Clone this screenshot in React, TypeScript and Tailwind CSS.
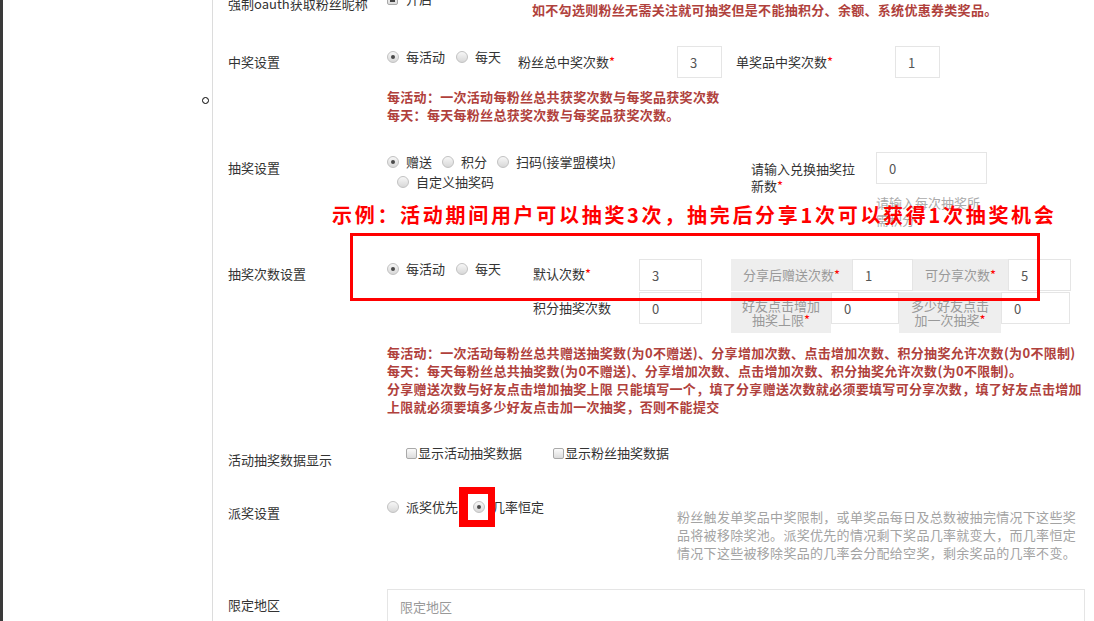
import React from "react";

const Radio = ({ checked = false }: { checked?: boolean }) => (
  <span className="inline-flex w-[12px] h-[12px] shrink-0 items-center justify-center rounded-full border border-[#c2c2c2] bg-linear-to-b from-[#f7f7f7] to-[#d8d8d8]">
    {checked && <span className="w-[4px] h-[4px] rounded-full bg-[#4a4a4a]" />}
  </span>
);

const Opt = ({ checked = false, label, cls = "" }: { checked?: boolean; label: string; cls?: string }) => (
  <span className={"inline-flex items-center " + cls}>
    <Radio checked={checked} />
    <span className="ml-[7px]">{label}</span>
  </span>
);

const Check = ({ checked = false }: { checked?: boolean }) => (
  <span className="inline-flex w-[11px] h-[11px] shrink-0 items-center justify-center rounded-[2px] border border-[#a9a9a9] bg-linear-to-b from-[#fbfbfb] to-[#dcdcdc]">
    {checked && <span className="w-[5px] h-[5px] bg-[#444]" />}
  </span>
);

const Star = () => <span className="text-[#f00]">*</span>;

const Box = ({ v, w, h = "h-[32px]" }: { v: string; w: string; h?: string }) => (
  <input
    readOnly
    defaultValue={v}
    className={`${w} ${h} shrink-0 border border-[#e5e5e5] bg-white px-[12px] text-[13px] text-[#555] outline-none`}
  />
);

export default function App() {
  return (
    <div className="w-[1094px] h-[621px] overflow-hidden flex bg-white [font-family:'Noto_Sans_CJK_SC','Noto_Sans',sans-serif] text-[13px] text-[#333]">
      <div className="w-[3px] shrink-0 bg-[#3a3a3a]" />
      <div className="w-[209px] shrink-0 relative">
        <span className="absolute left-[199px] top-[97px] w-[7px] h-[7px] rounded-full border-[1.5px] border-black" />
      </div>
      <div className="flex-1 relative border-l border-[#dcdcdc] pl-[15px] flex flex-col">
        {/* Row A */}
        <div className="flex h-[52px] -mt-[6px] shrink-0">
          <div className="w-[159px] shrink-0 leading-[20px] whitespace-nowrap">强制oauth获取粉丝昵称</div>
          <div className="flex items-start">
            <div className="w-[145px] h-[20px] -mt-[5px] leading-[20px] flex items-center">
              <Check checked />
              <span className="ml-[8px]">开启</span>
            </div>
            <div className="mt-[6px] leading-[20px] font-bold tracking-[0.3px] text-[#b0413c] whitespace-nowrap">
              如不勾选则粉丝无需关注就可抽奖但是不能抽积分、余额、系统优惠券类奖品。
            </div>
          </div>
        </div>

        {/* Row B 中奖设置 */}
        <div className="flex h-[106px] shrink-0">
          <div className="w-[159px] shrink-0 pt-[6px] leading-[20px]">中奖设置</div>
          <div className="flex flex-col">
            <div className="flex h-[32px]">
              <div className="w-[131px] pt-[1px] leading-[20px] flex items-center self-start">
                <Opt checked label="每活动" />
                <Opt label="每天" cls="ml-[11px]" />
              </div>
              <div className="w-[159px] pt-[6px] leading-[20px]">
                粉丝总中奖次数<Star />
              </div>
              <Box v="3" w="w-[45px]" />
              <div className="ml-[14px] w-[159px] pt-[6px] leading-[20px]">
                单奖品中奖次数<Star />
              </div>
              <Box v="1" w="w-[45px]" />
            </div>
            <div className="mt-[10px] leading-[18px] font-bold tracking-[0.3px] text-[#b0413c] whitespace-nowrap">
              每活动：一次活动每粉丝总共获奖次数与每奖品获奖次数
              <br />
              每天：每天每粉丝总获奖次数与每奖品获奖次数。
            </div>
          </div>
        </div>

        {/* Row C 抽奖设置 */}
        <div className="flex h-[107px] shrink-0">
          <div className="w-[159px] shrink-0 pt-[6px] leading-[20px]">抽奖设置</div>
          <div className="flex items-start">
            <div className="w-[240px] leading-[20px]">
              <div className="flex items-center">
                <Opt checked label="赠送" />
                <Opt label="积分" cls="ml-[10px]" />
                <Opt label="扫码(接掌盟模块)" cls="ml-[10px]" />
              </div>
              <div className="flex items-center pl-[10px]">
                <Opt label="自定义抽奖码" />
              </div>
            </div>
            <div className="ml-[124px] w-[112px] pt-[8px] leading-[17px]">
              请输入兑换抽奖拉
              <br />
              新数<Star />
            </div>
            <div className="ml-[13px] flex flex-col">
              <Box v="0" w="w-[111px]" />
              <div className="mt-[10px] leading-[17px] text-[#aaa]">
                请输入每次抽奖所
                <br />
                需积分
              </div>
            </div>
          </div>
        </div>

        {/* Row D 抽奖次数设置 */}
        <div className="flex h-[184px] shrink-0">
          <div className="w-[159px] shrink-0 pt-[5px] leading-[20px]">抽奖次数设置</div>
          <div className="flex flex-col">
            <div className="flex">
              <div className="w-[146px] leading-[20px] flex items-center self-start">
                <Opt checked label="每活动" />
                <Opt label="每天" cls="ml-[11px]" />
              </div>
              <div className="flex flex-col">
                <div className="flex h-[32px]">
                  <div className="w-[106px] pt-[5px] leading-[20px]">
                    默认次数<Star />
                  </div>
                  <Box v="3" w="w-[63px]" />
                  <div className="ml-[29px] flex">
                    <div className="w-[121px] h-[32px] bg-[#eee] text-[#999] text-center leading-[32px]">
                      分享后赠送次数<Star />
                    </div>
                    <Box v="1" w="w-[61px]" />
                    <div className="w-[95px] h-[32px] bg-[#eee] text-[#999] text-center leading-[32px]">
                      可分享次数<Star />
                    </div>
                    <Box v="5" w="w-[63px]" />
                  </div>
                </div>
                <div className="flex mt-[1px] items-start">
                  <div className="w-[106px] pt-[6px] leading-[20px]">积分抽奖次数</div>
                  <Box v="0" w="w-[63px]" />
                  <div className="ml-[29px] flex items-start">
                    <div className="w-[100px] h-[41px] bg-[#eee] text-[#999] text-center pt-[7px] leading-[14px]">
                      好友点击增加
                      <br />
                      抽奖上限<Star />
                    </div>
                    <Box v="0" w="w-[68px]" />
                    <div className="w-[102px] h-[41px] bg-[#eee] text-[#999] text-center pt-[7px] leading-[14px]">
                      多少好友点击
                      <br />
                      加一次抽奖<Star />
                    </div>
                    <Box v="0" w="w-[69px]" />
                  </div>
                </div>
              </div>
            </div>
            <div className="mt-[11px] leading-[18px] font-bold tracking-[0.3px] text-[#b0413c] whitespace-nowrap">
              每活动：一次活动每粉丝总共赠送抽奖数(为0不赠送)、分享增加次数、点击增加次数、积分抽奖允许次数(为0不限制)
              <br />
              每天：每天每粉丝总共抽奖数(为0不赠送)、分享增加次数、点击增加次数、积分抽奖允许次数(为0不限制)。
              <br />
              分享赠送次数与好友点击增加抽奖上限 只能填写一个，填了分享赠送次数就必须要填写可分享次数，填了好友点击增加
              <br />
              上限就必须要填多少好友点击加一次抽奖，否则不能提交
            </div>
          </div>
        </div>

        {/* Row E 活动抽奖数据显示 */}
        <div className="flex h-[54px] shrink-0">
          <div className="w-[159px] shrink-0 pt-[7px] leading-[20px]">活动抽奖数据显示</div>
          <div className="flex items-center self-start leading-[20px]">
            <span className="ml-[19px] inline-flex items-center">
              <Check />
              <span className="ml-[1px]">显示活动抽奖数据</span>
            </span>
            <span className="ml-[31px] inline-flex items-center">
              <Check />
              <span className="ml-[1px]">显示粉丝抽奖数据</span>
            </span>
          </div>
        </div>

        {/* Row F 派奖设置 */}
        <div className="flex h-[92px] shrink-0">
          <div className="w-[159px] shrink-0 pt-[6px] leading-[20px]">派奖设置</div>
          <div className="flex items-start">
            <div className="w-[290px] leading-[20px] flex items-center">
              <Opt label="派奖优先" />
              <Opt checked label="几率恒定" cls="ml-[15px]" />
            </div>
            <div className="pt-[11px] leading-[18px] tracking-[0.3px] text-[#a3a3a3] whitespace-nowrap">
              粉丝触发单奖品中奖限制，或单奖品每日及总数被抽完情况下这些奖
              <br />
              品将被移除奖池。派奖优先的情况剩下奖品几率就变大，而几率恒定
              <br />
              情况下这些被移除奖品的几率会分配给空奖，剩余奖品的几率不变。
            </div>
          </div>
        </div>

        {/* Row G 限定地区 */}
        <div className="flex shrink-0">
          <div className="w-[159px] shrink-0 pt-[6px] leading-[20px]">限定地区</div>
          <input
            readOnly
            placeholder="限定地区"
            className="w-[698px] h-[34px] border border-[#e5e5e5] px-[12px] text-[13px] text-[#555] placeholder:text-[#999] outline-none"
          />
        </div>

        {/* annotations */}
        <div className="absolute left-[119px] top-[203px] leading-[24px] text-[20px] font-bold tracking-[2.7px] text-[#f00] whitespace-nowrap">
          示例：活动期间用户可以抽奖3次，抽完后分享1次可以获得1次抽奖机会
        </div>
        <div className="absolute left-[137px] top-[233px] w-[690px] h-[68px] border-[3px] border-[#f00]" />
        <div className="absolute left-[246px] top-[487px] w-[36px] h-[40px] border-[7px] border-l-[9px] border-[#f00]" />
      </div>
    </div>
  );
}
